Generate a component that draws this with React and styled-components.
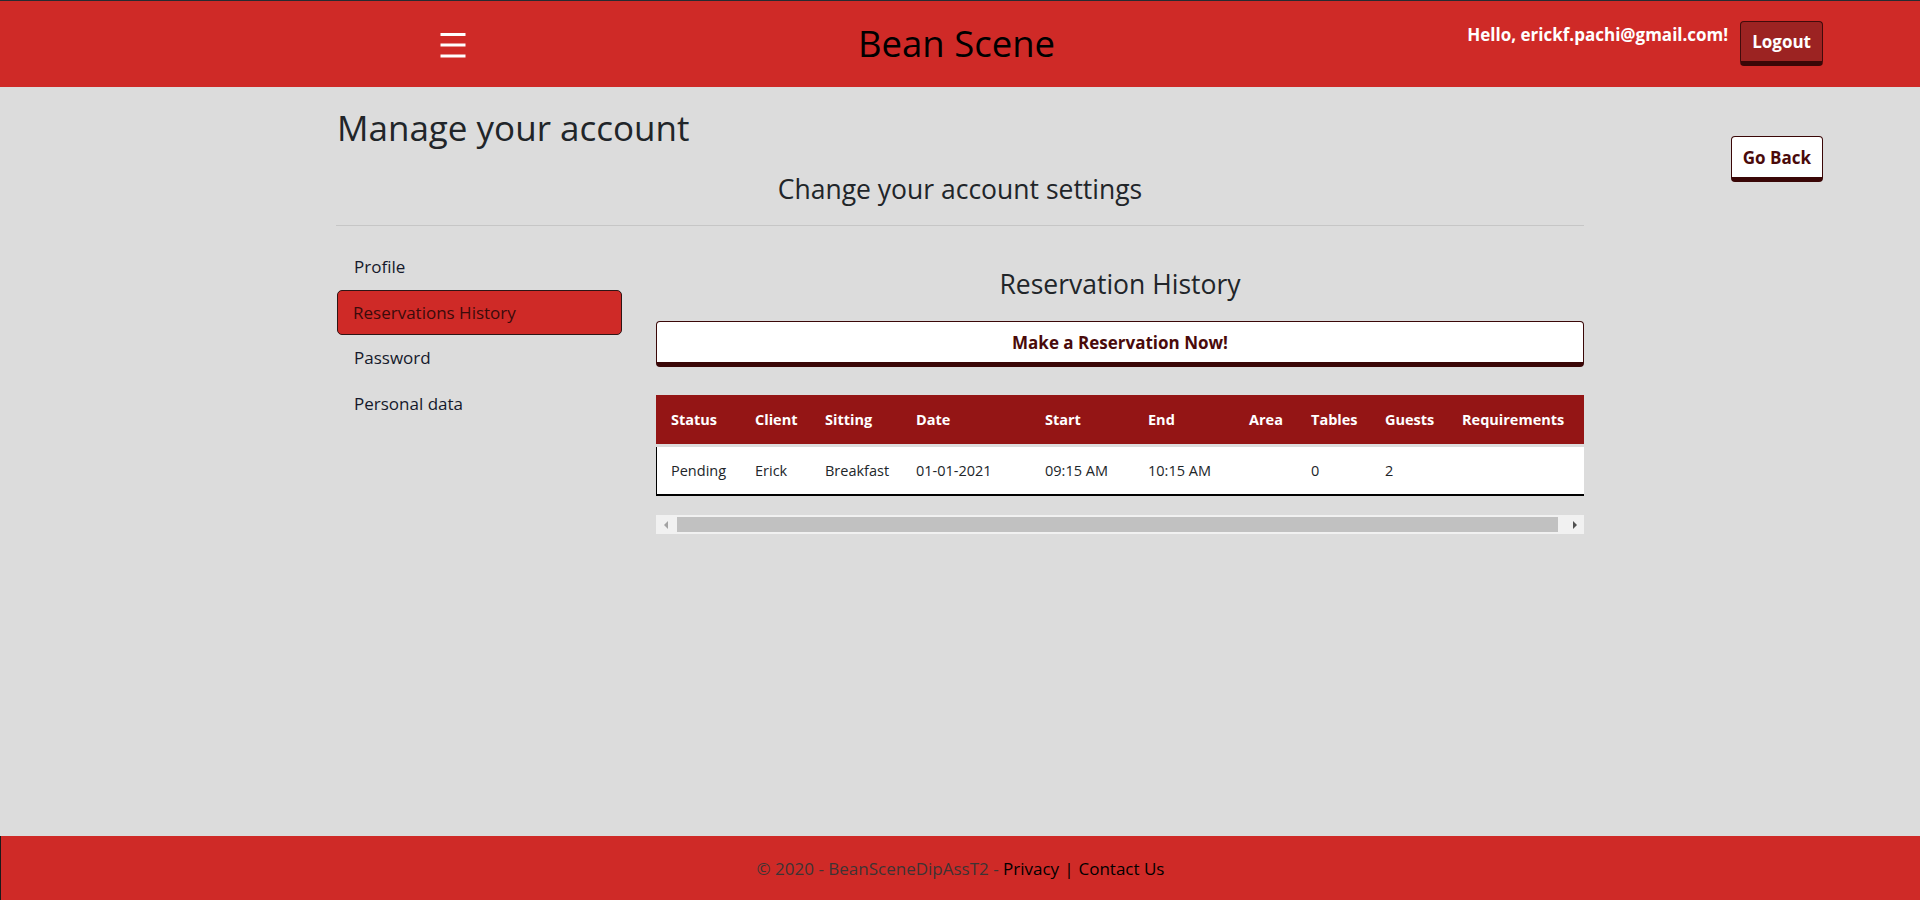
import React from "react";
import styled, { createGlobalStyle } from "styled-components";

const GlobalStyle = createGlobalStyle`
  html, body { margin: 0; padding: 0; }
  body {
    background: #dcdcdc;
    font-family: "Open Sans", "Noto Sans", sans-serif;
    color: #212529;
  }
  * { box-sizing: border-box; }
`;

const Page = styled.div`
  min-height: 900px;
  display: flex;
  flex-direction: column;
`;

const Header = styled.header`
  height: 87px;
  background: #cf2a27;
  border-top: 1px solid #262b31;
  display: grid;
  grid-template-columns: 1fr auto 1fr;
  align-items: start;
`;

const MenuButton = styled.button`
  justify-self: start;
  margin: 21px 0 0 440px;
  width: 26px;
  height: 45px;
  padding: 0;
  border: none;
  background: transparent;
  display: flex;
  align-items: center;
  cursor: pointer;
`;

const Brand = styled.div`
  font-size: 36.5px;
  color: #000;
  line-height: 86px;
  margin: -1px 7px 0 0;
`;

const UserArea = styled.div`
  justify-self: end;
  display: flex;
  align-items: flex-start;
  gap: 12px;
  padding: 20px 97px 0 0;
`;

const Hello = styled.span`
  color: #fff;
  font-weight: 700;
  font-size: 17px;
  line-height: 28px;
`;

const DarkButton = styled.button`
  height: 45px;
  padding: 0 11px;
  background: #9c2322;
  color: #fff;
  font-family: inherit;
  font-weight: 700;
  font-size: 17px;
  border: 1px solid #420b0b;
  border-bottom: 5px solid #3a0707;
  border-radius: 4px;
`;

const Main = styled.main`
  flex: 1;
  display: grid;
  grid-template-columns: 1fr 1248px 1fr;
  align-items: start;
`;

const Content = styled.div`
  grid-column: 2;
  min-width: 0;
`;

const Aside = styled.div`
  grid-column: 3;
  display: flex;
  justify-content: flex-end;
  padding: 49px 97px 0 0;
`;

const LightButton = styled.button`
  height: 46px;
  padding: 0 ${(p) => (p.$wide ? "0" : "11px")};
  width: ${(p) => (p.$wide ? "100%" : "auto")};
  background: #fff;
  color: #4a0a0a;
  font-family: inherit;
  font-weight: 700;
  font-size: 17px;
  border: 1px solid #3a0707;
  border-bottom: 5px solid #3a0707;
  border-radius: 4px;
`;

const Title = styled.h1`
  margin: 20px 0 0 1px;
  font-size: 35px;
  font-weight: 500;
  line-height: 42px;
  color: #212529;
`;

const Subtitle = styled.h4`
  margin: 24px 0 0;
  text-align: center;
  font-size: 26.5px;
  font-weight: 500;
  line-height: 32px;
  color: #212529;
`;

const Divider = styled.hr`
  margin: 20px 0 0;
  border: none;
  border-top: 1px solid #c6c6c6;
`;

const Body = styled.div`
  display: grid;
  grid-template-columns: 286px minmax(0, 1fr);
  column-gap: 34px;
  padding-top: 18px;
`;

const Nav = styled.nav`
  display: flex;
  flex-direction: column;
  padding-left: 1px;
`;

const NavItem = styled.a`
  display: flex;
  align-items: center;
  height: 45.5px;
  padding-left: ${(p) => (p.$active ? "15px" : "17px")};
  font-size: 17px;
  color: ${(p) => (p.$active ? "#3b0b0b" : "#15192b")};
  background: ${(p) => (p.$active ? "#cf2a27" : "transparent")};
  border: ${(p) => (p.$active ? "1px solid #2e1515" : "none")};
  border-radius: 5px;
  text-decoration: none;
`;

const Panel = styled.section`
  display: flex;
  flex-direction: column;
  min-width: 0;
`;

const PanelTitle = styled.h4`
  margin: 24px 0 21px;
  text-align: center;
  font-size: 26.5px;
  font-weight: 500;
  line-height: 32px;
  color: #212529;
`;

const ScrollBox = styled.div`
  margin-top: 28px;
  overflow-x: auto;
  scrollbar-width: none;
  &::-webkit-scrollbar { display: none; }
`;

const Table = styled.table`
  width: 937px;
  table-layout: fixed;
  border-collapse: separate;
  border-spacing: 0;
  margin-bottom: 19px;
  font-size: 14.5px;
`;

const HeadCell = styled.th`
  height: 52px;
  padding: 0 0 0 15px;
  background: #941515;
  color: #fff;
  font-weight: 700;
  text-align: left;
  border-bottom: 3px solid #dcdcdc;
  white-space: nowrap;
`;

const Cell = styled.td`
  height: 49px;
  padding: 0 0 0 ${(p) => (p.$first ? "14px" : "15px")};
  background: #fff;
  color: #212529;
  white-space: nowrap;
  border-bottom: 2px solid #000;
  border-left: ${(p) => (p.$first ? "1px solid #000" : "none")};
`;

const ScrollTrack = styled.div`
  height: 19px;
  background: #f1f1f1;
  display: flex;
  align-items: stretch;
`;

const ScrollArrow = styled.span`
  width: 19px;
  flex: none;
  display: flex;
  align-items: center;
  justify-content: center;
  &::before {
    content: "";
    width: 0;
    height: 0;
    border-top: 4px solid transparent;
    border-bottom: 4px solid transparent;
    ${(p) =>
      p.$dir === "left"
        ? "border-right: 4px solid #a3a3a3;"
        : "border-left: 4px solid #505050;"}
  }
`;

const ScrollThumb = styled.span`
  flex: 1;
  margin: 2px 7px 2px 2px;
  background: #c1c1c1;
`;

const Footer = styled.footer`
  height: 64px;
  background: #cf2a27;
  border-left: 1px solid #1a1a1a;
  display: flex;
  align-items: center;
  justify-content: center;
  font-size: 17px;
  color: #3d3434;
  padding-top: 1px;
`;

const FooterLink = styled.a`
  color: #000;
  text-decoration: none;
`;

const Sep = styled.span`
  color: #000;
  margin: 0 5px;
`;

const columns = [
  ["Status", 84],
  ["Client", 70],
  ["Sitting", 91],
  ["Date", 129],
  ["Start", 103],
  ["End", 101],
  ["Area", 62],
  ["Tables", 74],
  ["Guests", 77],
  ["Requirements", 146],
];

const rows = [
  ["Pending", "Erick", "Breakfast", "01-01-2021", "09:15 AM", "10:15 AM", "", "0", "2", ""],
];

function Hamburger() {
  return (
    <svg width="26" height="26" viewBox="0 0 26 26" aria-hidden="true">
      <rect x="0.5" y="1" width="25" height="3" fill="#fff" />
      <rect x="0.5" y="11.5" width="25" height="3" fill="#fff" />
      <rect x="0.5" y="22.5" width="25" height="3" fill="#fff" />
    </svg>
  );
}

export default function App() {
  return (
    <>
      <GlobalStyle />
      <Page>
        <Header>
          <MenuButton aria-label="menu">
            <Hamburger />
          </MenuButton>
          <Brand>Bean Scene</Brand>
          <UserArea>
            <Hello>Hello, erickf.pachi@gmail.com!</Hello>
            <DarkButton>Logout</DarkButton>
          </UserArea>
        </Header>
        <Main>
          <Content>
            <Title>Manage your account</Title>
            <Subtitle>Change your account settings</Subtitle>
            <Divider />
            <Body>
              <Nav>
                <NavItem>Profile</NavItem>
                <NavItem $active>Reservations History</NavItem>
                <NavItem>Password</NavItem>
                <NavItem>Personal data</NavItem>
              </Nav>
              <Panel>
                <PanelTitle>Reservation History</PanelTitle>
                <LightButton $wide>Make a Reservation Now!</LightButton>
                <ScrollBox>
                  <Table>
                    <colgroup>
                      {columns.map(([name, w]) => (
                        <col key={name} style={{ width: w }} />
                      ))}
                    </colgroup>
                    <thead>
                      <tr>
                        {columns.map(([name]) => (
                          <HeadCell key={name}>{name}</HeadCell>
                        ))}
                      </tr>
                    </thead>
                    <tbody>
                      {rows.map((r, i) => (
                        <tr key={i}>
                          {r.map((v, j) => (
                            <Cell key={j} $first={j === 0}>
                              {v}
                            </Cell>
                          ))}
                        </tr>
                      ))}
                    </tbody>
                  </Table>
                </ScrollBox>
                <ScrollTrack aria-hidden="true">
                  <ScrollArrow $dir="left" />
                  <ScrollThumb />
                  <ScrollArrow $dir="right" />
                </ScrollTrack>
              </Panel>
            </Body>
          </Content>
          <Aside>
            <LightButton>Go Back</LightButton>
          </Aside>
        </Main>
        <Footer>
          © 2020 - BeanSceneDipAssT2 -&nbsp;<FooterLink>Privacy</FooterLink>
          <Sep>|</Sep>
          <FooterLink>Contact Us</FooterLink>
        </Footer>
      </Page>
    </>
  );
}
